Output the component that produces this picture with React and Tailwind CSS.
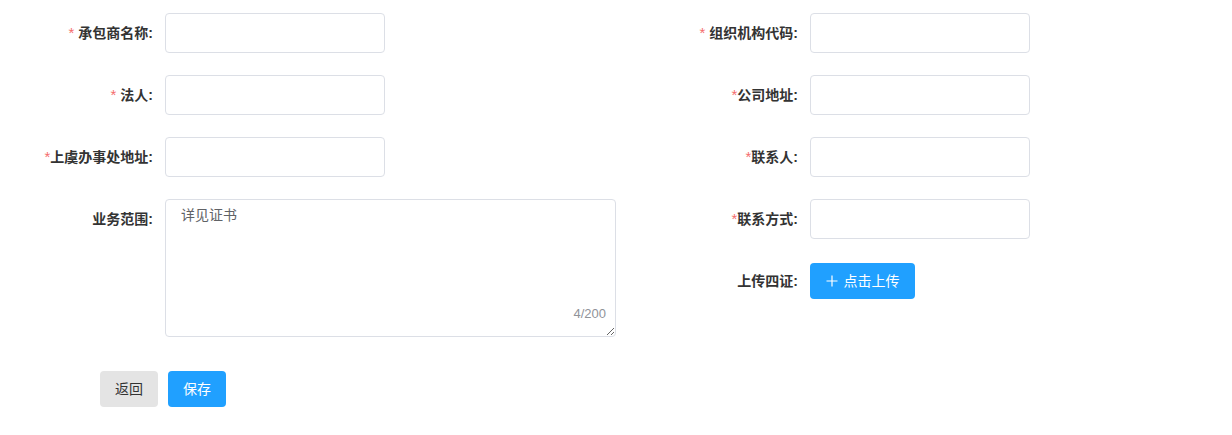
import React from 'react';

const FONT = { fontFamily: '"Liberation Sans", "Noto Sans CJK SC", sans-serif' };

// Une ligne du formulaire : libellé à droite + champ
const Field = ({ label, required, spaced, children, center = true }) => (
  <div className={`flex ${center ? 'items-center min-h-[40px]' : 'items-start'} mb-[22px]`}>
    <label
      className={`w-[165px] shrink-0 pr-[12px] text-right text-[14px] font-bold text-[#333] ${center ? '' : 'pt-[10px]'}`}
    >
      {required && <span className="text-[#f56c6c] font-normal text-[15px]">*</span>}
      {spaced && ' '}
      {label}
    </label>
    {children}
  </div>
);

const Input = () => (
  <input
    type="text"
    className="w-[220px] h-[40px] rounded-[4px] border border-[#dcdfe6] bg-white px-[15px] text-[14px] text-[#606266] outline-none"
  />
);

export default function App() {
  return (
    <div className="min-h-[435px] w-full bg-white pt-[13px]" style={FONT}>
      <div className="flex">
        {/* Colonne gauche */}
        <div className="w-[645px] shrink-0">
          <Field label="承包商名称:" required spaced>
            <Input />
          </Field>
          <Field label="法人:" required spaced>
            <Input />
          </Field>
          <Field label="上虞办事处地址:" required>
            <Input />
          </Field>
          <Field label="业务范围:" center={false}>
            <div className="relative">
              <textarea
                defaultValue="详见证书"
                className="block w-[451px] h-[138px] rounded-[4px] border border-[#dcdfe6] bg-white px-[15px] py-[5px] text-[14px] leading-[1.5] text-[#606266] outline-none"
                style={FONT}
              />
              <span className="absolute right-[10px] bottom-[17px] text-[13px] text-[#909399] leading-none">
                4/200
              </span>
            </div>
          </Field>
        </div>

        {/* Colonne droite */}
        <div className="flex-1">
          <Field label="组织机构代码:" required spaced>
            <Input />
          </Field>
          <Field label="公司地址:" required>
            <Input />
          </Field>
          <Field label="联系人:" required>
            <Input />
          </Field>
          <Field label="联系方式:" required>
            <Input />
          </Field>
          <Field label="上传四证:">
            <button className="flex h-[36px] w-[105px] items-center justify-center gap-[6px] rounded-[4px] bg-[#20a0ff] text-[14px] text-white">
              <svg width="12" height="12" viewBox="0 0 12 12" fill="none" stroke="white" strokeWidth="1.2">
                <path d="M6 0.5v11M0.5 6h11" />
              </svg>
              点击上传
            </button>
          </Field>
        </div>
      </div>

      <div className="ml-[100px] mt-[12px] flex gap-[10px]">
        <button className="h-[36px] w-[58px] rounded-[4px] bg-[#e4e4e4] text-[14px] text-[#333]">返回</button>
        <button className="h-[36px] w-[58px] rounded-[4px] bg-[#20a0ff] text-[14px] text-white">保存</button>
      </div>
    </div>
  );
}
